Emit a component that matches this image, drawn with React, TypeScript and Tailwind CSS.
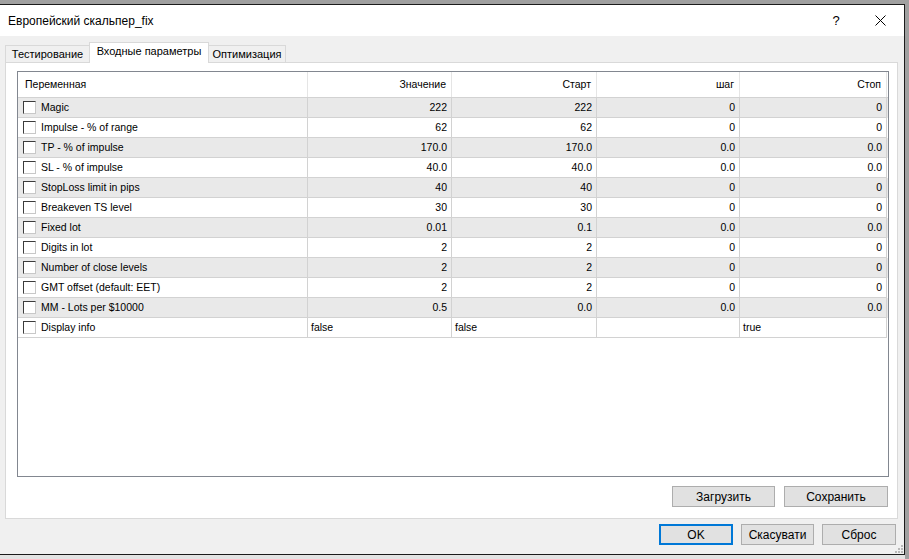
const rows: [string, string, string, string, string][] = [
  ['Magic', '222', '222', '0', '0'],
  ['Impulse - % of range', '62', '62', '0', '0'],
  ['TP - % of impulse', '170.0', '170.0', '0.0', '0.0'],
  ['SL - % of impulse', '40.0', '40.0', '0.0', '0.0'],
  ['StopLoss limit in pips', '40', '40', '0', '0'],
  ['Breakeven TS level', '30', '30', '0', '0'],
  ['Fixed lot', '0.01', '0.1', '0.0', '0.0'],
  ['Digits in lot', '2', '2', '0', '0'],
  ['Number of close levels', '2', '2', '0', '0'],
  ['GMT offset (default: EET)', '2', '2', '0', '0'],
  ['MM - Lots per $10000', '0.5', '0.0', '0.0', '0.0'],
];

const cols = 'grid grid-cols-[290px_144px_145px_143px_147px]';

const Checkbox = () => (
  <span className="box-border w-[13px] h-[13px] shrink-0 bg-white border border-t-[#3c3c3c] border-l-[#3c3c3c] border-r-[#c8c8c8] border-b-[#c8c8c8]" />
);

const Cell = ({ children, left }: { children?: React.ReactNode; left?: boolean }) => (
  <div
    className={`h-[20px] border-r border-b border-[#d2d2d2] flex items-center ${
      left ? 'justify-start pl-[3px]' : 'justify-end pr-[4px]'
    }`}
  >
    {children}
  </div>
);

const Btn = ({ label, w, primary }: { label: string; w: string; primary?: boolean }) => (
  <div
    className={`h-[21px] ${w} flex items-center justify-center bg-[#e1e1e1] text-[12px] text-black ${
      primary ? 'border-2 border-[#0078d7]' : 'border border-[#adadad]'
    }`}
  >
    {label}
  </div>
);

export default function App() {
  const ui = { fontFamily: '"Liberation Sans", Arial, sans-serif' };
  return (
    <div className="w-[909px] h-[559px] bg-[#a0a0a0] overflow-hidden pt-[4px]" style={ui}>
      <div className="w-[905px] h-[551px] border-t border-r border-b border-[#1b1b1b] bg-[#f0f0f0] flex flex-col">
        {/* Title bar */}
        <div className="h-[31px] bg-white flex items-center pl-[8px] text-[12px] text-black">
          <span className="flex-1">Европейский скальпер_fix</span>
          <span className="w-[14px] text-center text-[13px] mr-[32px]">?</span>
          <svg width="11" height="11" viewBox="0 0 11 11" className="mr-[18px]">
            <path d="M0.5 0.5 L10.5 10.5 M10.5 0.5 L0.5 10.5" stroke="#000" strokeWidth="1" />
          </svg>
        </div>

        {/* Tabs */}
        <div className="mt-[6px] h-[20px] flex items-end pl-[5px] text-[11px] text-black">
          <div className="h-[17px] w-[84px] border-t border-l border-[#d9d9d9] flex items-center justify-center">
            Тестирование
          </div>
          <div className="relative z-10 h-[21px] w-[120px] -mb-px bg-white border border-b-0 border-[#d9d9d9] flex items-center justify-center pb-[3px]">
            Входные параметры
          </div>
          <div className="h-[17px] w-[77px] border-t border-r border-[#d9d9d9] flex items-center justify-center">
            Оптимизация
          </div>
        </div>

        {/* Tab panel */}
        <div className="ml-[5px] w-[893px] h-[457px] bg-white border border-[#d9d9d9] pl-[11px] pt-[8px] flex flex-col">
          <div className="w-[872px] h-[406px] border border-[#828790] text-[10.5px] text-black">
            <div className={`${cols} h-[26px] border-b border-[#d2d2d2]`}>
              <div className="border-r border-[#e5e5e5] flex items-center pl-[7px]">Переменная</div>
              <div className="border-r border-[#e5e5e5] flex items-center justify-end pr-[5px]">Значение</div>
              <div className="border-r border-[#e5e5e5] flex items-center justify-end pr-[5px]">Старт</div>
              <div className="border-r border-[#e5e5e5] flex items-center justify-end pr-[5px]">шаг</div>
              <div className="border-r border-[#e5e5e5] flex items-center justify-end pr-[5px]">Стоп</div>
            </div>
            {rows.map((r, i) => (
              <div key={r[0]} className={`${cols} ${i % 2 === 0 ? 'bg-[#e9e9e9]' : 'bg-white'}`}>
                <div className="h-[20px] border-r border-b border-[#d2d2d2] flex items-center pl-[5px] gap-[5px]">
                  <Checkbox />
                  <span>{r[0]}</span>
                </div>
                <Cell>{r[1]}</Cell>
                <Cell>{r[2]}</Cell>
                <Cell>{r[3]}</Cell>
                <Cell>{r[4]}</Cell>
              </div>
            ))}
            <div className={`${cols} bg-white`}>
              <div className="h-[20px] border-r border-b border-[#d2d2d2] flex items-center pl-[5px] gap-[5px]">
                <Checkbox />
                <span>Display info</span>
              </div>
              <Cell left>false</Cell>
              <Cell left>false</Cell>
              <Cell left />
              <Cell left>true</Cell>
            </div>
          </div>
          <div className="mt-[9px] w-[872px] flex justify-end gap-[9px] pr-[1px]">
            <Btn label="Загрузить" w="w-[103px]" />
            <Btn label="Сохранить" w="w-[104px]" />
          </div>
        </div>

        {/* Dialog buttons */}
        <div className="mt-[5px] flex justify-end gap-[8px] pr-[8px]">
          <Btn label="OK" w="w-[74px]" primary />
          <Btn label="Скасувати" w="w-[73px]" />
          <Btn label="Сброс" w="w-[74px]" />
        </div>
        <div className="flex-1 flex justify-end items-end pr-[1px] pb-[1px]">
          <svg width="8" height="8" viewBox="0 0 8 8">
            <rect x="6" y="0" width="2" height="2" fill="#b8b8b8" />
            <rect x="3" y="3" width="2" height="2" fill="#b8b8b8" />
            <rect x="6" y="3" width="2" height="2" fill="#b8b8b8" />
            <rect x="0" y="6" width="2" height="2" fill="#b8b8b8" />
            <rect x="3" y="6" width="2" height="2" fill="#b8b8b8" />
            <rect x="6" y="6" width="2" height="2" fill="#b8b8b8" />
          </svg>
        </div>
      </div>
      <div className="w-[905px] h-[4px] bg-[#e3e3e3]" />
    </div>
  );
}
